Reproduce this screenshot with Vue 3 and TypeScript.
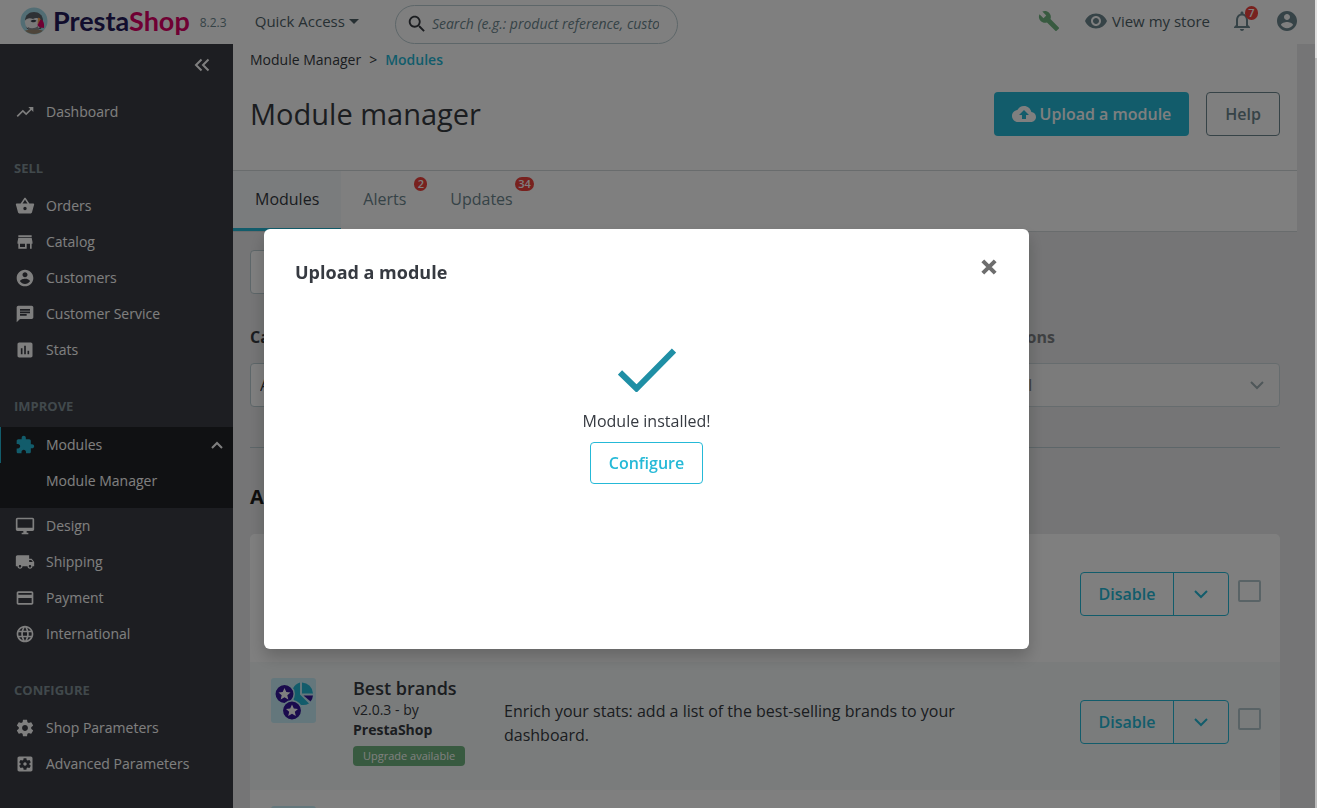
<script setup lang="ts">
import { ref } from 'vue'

interface NavItem {
  label: string
  icon: string
  active?: boolean
  children?: string[]
}
interface NavSection {
  title: string
  items: NavItem[]
}
interface ModuleRow {
  name: string
  version: string
  author: string
  description: string
  upgrade: boolean
  ready: boolean
}

const account =
  'M12 2C6.480 2 2 6.480 2 12s4.480 10 10 10 10-4.480 10-10S17.520 2 12 2zm0 3c1.660 0 3 1.340 3 3s-1.340 3-3 3-3-1.340-3-3 1.340-3 3-3zm0 14.200c-2.500 0-4.710-1.280-6-3.220.030-1.990 4-3.080 6-3.080 1.990 0 5.970 1.090 6 3.080-1.290 1.940-3.500 3.220-6 3.220z'

const icons: Record<string, string> = {
  trending: 'M16 6l2.290 2.290-4.880 4.880-4-4L2 16.590 3.410 18l6-6 4 4 6.300-6.290L22 12V6z',
  basket:
    'M17.210 9l-4.380-6.560c-.190-.280-.510-.420-.830-.420-.320 0-.640.140-.830.430L6.790 9H2c-.550 0-1 .450-1 1 0 .090.010.180.040.270l2.540 9.270c.230.840 1 1.460 1.920 1.460h13c.920 0 1.690-.620 1.930-1.460l2.540-9.270L23 10c0-.550-.450-1-1-1h-4.790zM9 9l3-4.400L15 9H9zm3 8c-1.100 0-2-.900-2-2s.900-2 2-2 2 .900 2 2-.900 2-2 2z',
  store: 'M20 4H4v2h16V4zm1 10v-2l-1-5H4l-1 5v2h1v6h10v-6h4v6h2v-6h1zm-9 4H6v-4h6v4z',
  account,
  chat: 'M20 2H4c-1.100 0-1.990.900-1.990 2L2 22l4-4h14c1.100 0 2-.900 2-2V4c0-1.100-.900-2-2-2zM6 9h12v2H6V9zm8 5H6v-2h8v2zm4-6H6V6h12v2z',
  stats:
    'M19 3H5c-1.100 0-2 .900-2 2v14c0 1.100.900 2 2 2h14c1.100 0 2-.900 2-2V5c0-1.100-.900-2-2-2zM9 17H7v-7h2v7zm4 0h-2V7h2v10zm4 0h-2v-4h2v4z',
  puzzle:
    'M20.500 11H19V7c0-1.100-.900-2-2-2h-4V3.500C13 2.120 11.880 1 10.500 1S8 2.120 8 3.500V5H4c-1.100 0-1.990.900-1.990 2v3.800H3.500c1.490 0 2.700 1.210 2.700 2.700s-1.210 2.700-2.700 2.700H2V20c0 1.100.900 2 2 2h3.800v-1.500c0-1.490 1.210-2.700 2.700-2.700 1.490 0 2.700 1.210 2.700 2.700V22H17c1.100 0 2-.900 2-2v-4h1.500c1.380 0 2.500-1.120 2.500-2.500S21.880 11 20.500 11z',
  desktop:
    'M21 2H3c-1.100 0-2 .900-2 2v12c0 1.100.900 2 2 2h7v2H8v2h8v-2h-2v-2h7c1.100 0 2-.900 2-2V4c0-1.100-.900-2-2-2zm0 12H3V4h18v10z',
  truck:
    'M20 8h-3V4H3c-1.100 0-2 .900-2 2v11h2c0 1.660 1.340 3 3 3s3-1.340 3-3h6c0 1.660 1.340 3 3 3s3-1.340 3-3h2v-5l-3-4zM6 18.500c-.830 0-1.500-.670-1.500-1.500s.670-1.500 1.500-1.500 1.500.670 1.500 1.500-.670 1.500-1.500 1.500zm13.500-9l1.960 2.500H17V9.500h2.500zm-1.500 9c-.830 0-1.500-.670-1.500-1.500s.670-1.500 1.500-1.500 1.500.670 1.500 1.500-.670 1.500-1.500 1.500z',
  card: 'M20 4H4c-1.110 0-1.990.890-1.990 2L2 18c0 1.110.890 2 2 2h16c1.110 0 2-.890 2-2V6c0-1.110-.890-2-2-2zm0 14H4v-6h16v6zm0-10H4V6h16v2z',
  globe:
    'M11.990 2C6.470 2 2 6.480 2 12s4.470 10 9.990 10C17.520 22 22 17.520 22 12S17.520 2 11.990 2zm6.930 6h-2.950c-.320-1.250-.780-2.450-1.380-3.560 1.840.630 3.370 1.910 4.330 3.560zM12 4.040c.830 1.200 1.480 2.530 1.910 3.960h-3.820c.430-1.430 1.080-2.760 1.910-3.960zM4.260 14C4.100 13.360 4 12.690 4 12s.100-1.360.260-2h3.380c-.080.660-.140 1.320-.140 2s.060 1.340.140 2H4.260zm.820 2h2.950c.320 1.250.780 2.450 1.380 3.560-1.840-.630-3.370-1.900-4.330-3.560zm2.950-8H5.080c.960-1.660 2.490-2.930 4.330-3.560C8.810 5.550 8.350 6.750 8.030 8zM12 19.960c-.830-1.200-1.480-2.530-1.910-3.960h3.820c-.430 1.430-1.080 2.760-1.910 3.960zM14.340 14H9.660c-.090-.660-.160-1.320-.160-2s.070-1.350.160-2h4.680c.090.650.160 1.320.160 2s-.070 1.340-.160 2zm.250 5.560c.600-1.110 1.060-2.310 1.380-3.560h2.950c-.960 1.650-2.490 2.930-4.330 3.560zM16.360 14c.080-.660.140-1.320.140-2s-.060-1.340-.140-2h3.380c.160.640.260 1.310.260 2s-.100 1.360-.260 2h-3.380z',
  gear: 'M19.430 12.980c.040-.320.070-.640.070-.980s-.030-.660-.070-.980l2.110-1.650c.190-.150.240-.420.120-.640l-2-3.460c-.120-.220-.390-.300-.610-.220l-2.490 1c-.520-.400-1.080-.730-1.690-.980l-.380-2.650C14.460 2.180 14.250 2 14 2h-4c-.250 0-.460.180-.490.420l-.380 2.650c-.610.250-1.170.590-1.690.980l-2.490-1c-.230-.090-.490 0-.610.220l-2 3.460c-.130.220-.070.490.120.640l2.110 1.650c-.040.320-.070.650-.070.980s.030.660.070.980l-2.110 1.650c-.190.150-.240.420-.120.640l2 3.460c.120.220.390.300.610.220l2.490-1c.520.400 1.080.730 1.690.980l.380 2.650c.030.240.240.420.490.420h4c.250 0 .460-.180.490-.420l.380-2.650c.610-.250 1.170-.590 1.690-.980l2.490 1c.230.090.490 0 .610-.220l2-3.460c.120-.220.070-.490-.120-.640l-2.110-1.650zM12 15.500c-1.930 0-3.500-1.570-3.500-3.500s1.570-3.500 3.500-3.500 3.500 1.570 3.500 3.500-1.570 3.500-3.500 3.500z',
  gearBox:
    'M12 10c-1.100 0-2 .900-2 2s.900 2 2 2 2-.900 2-2-.900-2-2-2zm7-7H5c-1.110 0-2 .900-2 2v14c0 1.100.890 2 2 2h14c1.110 0 2-.900 2-2V5c0-1.100-.890-2-2-2zm-1.750 9c0 .230-.020.460-.050.680l1.480 1.160c.130.110.170.300.080.450l-1.400 2.420c-.090.150-.270.210-.430.150l-1.740-.700c-.360.280-.760.510-1.180.690l-.260 1.850c-.030.170-.180.300-.350.300h-2.800c-.170 0-.320-.130-.350-.290l-.260-1.850c-.430-.180-.820-.410-1.180-.690l-1.740.700c-.160.060-.340 0-.430-.150l-1.400-2.420c-.090-.150-.050-.340.080-.450l1.480-1.160c-.030-.230-.050-.460-.050-.690 0-.230.020-.460.050-.680l-1.480-1.160c-.130-.110-.170-.300-.080-.450l1.400-2.420c.090-.150.270-.210.430-.150l1.740.700c.360-.280.760-.510 1.180-.690l.260-1.850c.030-.170.180-.300.350-.300h2.800c.170 0 .320.130.350.290l.260 1.850c.430.180.820.410 1.180.690l1.740-.700c.160-.060.340 0 .430.150l1.400 2.420c.090.150.050.340-.080.450l-1.480 1.160c.030.230.050.460.050.690z',
}

const sections: NavSection[] = [
  {
    title: 'SELL',
    items: [
      { label: 'Orders', icon: 'basket' },
      { label: 'Catalog', icon: 'store' },
      { label: 'Customers', icon: 'account' },
      { label: 'Customer Service', icon: 'chat' },
      { label: 'Stats', icon: 'stats' },
    ],
  },
  {
    title: 'IMPROVE',
    items: [
      { label: 'Modules', icon: 'puzzle', active: true, children: ['Module Manager'] },
      { label: 'Design', icon: 'desktop' },
      { label: 'Shipping', icon: 'truck' },
      { label: 'Payment', icon: 'card' },
      { label: 'International', icon: 'globe' },
    ],
  },
  {
    title: 'CONFIGURE',
    items: [
      { label: 'Shop Parameters', icon: 'gear' },
      { label: 'Advanced Parameters', icon: 'gearBox' },
    ],
  },
]

const tabs = [
  { label: 'Modules', count: 0 },
  { label: 'Alerts', count: 2 },
  { label: 'Updates', count: 34 },
]

const modules: ModuleRow[] = [
  { name: '', version: '', author: '', description: '', upgrade: false, ready: true },
  {
    name: 'Best brands',
    version: 'v2.0.3 - by',
    author: 'PrestaShop',
    description: 'Enrich your stats: add a list of the best-selling brands to your dashboard.',
    upgrade: true,
    ready: true,
  },
  { name: '', version: '', author: '', description: '', upgrade: false, ready: false },
]

const star = 'M0-6 1.800-2 6-1.600 2.800 1.200 3.800 5.400 0 3.200-3.800 5.400-2.800 1.200-6-1.600-1.800-2z'
const activeTab = ref('Modules')
const modalOpen = ref(true)
</script>

<template>
  <div class="shell">
    <header class="topbar">
      <a class="brand" href="#" aria-label="PrestaShop">
        <svg class="puffin" viewBox="0 0 28 28" aria-hidden="true">
          <circle cx="14" cy="14" r="13.500" fill="#a4dbe8" />
          <path d="M5 13C5.500 8 9 5 14 5s8.500 3 9 8l-2 9H7z" fill="#5d636b" />
          <path d="M4.800 14c1.700-3 5.200-3.500 8.200-2 2.500-1.500 5-1.500 6 .5l1 7.500c-2 3-11 3.500-13.500 0-1-1.500-1.700-4-1.700-6z" fill="#f5f5f5" />
          <path d="M10.500 14c2-1.500 4.500-1.500 6-.2-1 1.700-4.500 2.200-6 .2z" fill="#3f4450" />
          <path d="M8 20c3 2 7 1.500 10-1l1 4.500H8z" fill="#8b8f96" />
          <path d="M18 11c1.500-.5 2.500.5 3 2.500L17.500 18z" fill="#f2a154" />
          <path d="M20.500 12.500c2.500 0 4 3.500 3.500 8.500-3-.3-6-1-6.500-3z" fill="#df0067" />
          <path d="M5 23.500c6-1.500 12-1.500 18 0-4 4.500-14 4.500-18 0z" fill="#9c8b75" />
        </svg>
        <span class="wordmark">Presta<span>Shop</span></span>
      </a>
      <span class="version">8.2.3</span>
      <button class="quick" type="button">Quick Access <i class="caret"></i></button>
      <label class="search">
        <svg viewBox="0 0 24 24" aria-hidden="true">
          <path d="M15.500 14h-.790l-.280-.270C15.410 12.590 16 11.110 16 9.500 16 5.910 13.090 3 9.500 3S3 5.910 3 9.500 5.910 16 9.500 16c1.610 0 3.090-.590 4.230-1.570l.270.280v.790l5 4.990L20.490 19l-4.990-5zm-6 0C7.010 14 5 11.990 5 9.500S7.010 5 9.500 5 14 7.010 14 9.500 11.990 14 9.500 14z" />
        </svg>
        <input type="text" aria-label="Search" placeholder="Search (e.g.: product reference, customer name…)" />
      </label>
      <div class="tools">
        <a class="wrench" href="#" aria-label="Debug mode">
          <svg viewBox="0 0 24 24"><path d="M22.700 19l-9.100-9.100c.900-2.300.400-5-1.500-6.900-2-2-5-2.400-7.400-1.300L9 6 6 9 1.600 4.700C.400 7.100.900 10.100 2.900 12.100c1.900 1.900 4.600 2.400 6.900 1.500l9.100 9.100c.400.400 1 .400 1.400 0l2.300-2.300c.500-.400.500-1.100.100-1.400z" /></svg>
        </a>
        <a class="view" href="#">
          <svg viewBox="0 0 24 24" aria-hidden="true"><path d="M12 4.500C7 4.500 2.730 7.610 1 12c1.730 4.390 6 7.500 11 7.500s9.270-3.110 11-7.500c-1.730-4.390-6-7.500-11-7.500zM12 17c-2.760 0-5-2.240-5-5s2.240-5 5-5 5 2.240 5 5-2.240 5-5 5zm0-8c-1.660 0-3 1.340-3 3s1.340 3 3 3 3-1.340 3-3-1.340-3-3-3z" /></svg>
          View my store
        </a>
        <button class="bell" type="button" aria-label="Notifications">
          <svg viewBox="0 0 24 24"><path d="M12 22c1.100 0 2-.900 2-2h-4c0 1.100.900 2 2 2zm6-6v-5c0-3.070-1.630-5.640-4.500-6.320V4c0-.830-.670-1.500-1.500-1.500s-1.500.670-1.500 1.500v.680C7.640 5.360 6 7.920 6 11v5l-2 2v1h16v-1l-2-2zm-2 1H8v-6c0-2.480 1.510-4.500 4-4.500s4 2.020 4 4.500v6z" /></svg>
          <span class="badge">7</span>
        </button>
        <button class="user" type="button" aria-label="Account">
          <svg viewBox="0 0 24 24"><path :d="account" /></svg>
        </button>
      </div>
    </header>

    <nav class="sidebar" aria-label="Main">
      <button class="collapse" type="button" aria-label="Collapse menu">
        <svg viewBox="0 0 16 14"><path d="M7.500 1.500 2 7l5.500 5.500M14.500 1.500 9 7l5.500 5.500" /></svg>
      </button>
      <a class="item" href="#">
        <svg viewBox="0 0 24 24" aria-hidden="true"><path :d="icons.trending" /></svg>
        <span>Dashboard</span>
      </a>
      <section v-for="s in sections" :key="s.title">
        <h2>{{ s.title }}</h2>
        <template v-for="i in s.items" :key="i.label">
          <a class="item" :class="{ active: i.active }" href="#">
            <svg viewBox="0 0 24 24" aria-hidden="true"><path :d="icons[i.icon]" /></svg>
            <span>{{ i.label }}</span>
            <svg v-if="i.children" class="chevron" viewBox="0 0 12 8" aria-hidden="true"><path d="M1 7l5-5 5 5" /></svg>
          </a>
          <div v-if="i.children" class="submenu">
            <a v-for="c in i.children" :key="c" href="#">{{ c }}</a>
          </div>
        </template>
      </section>
    </nav>

    <main class="main">
      <div class="page-head">
        <ol class="crumbs">
          <li><a href="#">Module Manager</a></li>
          <li><a class="here" href="#">Modules</a></li>
        </ol>
        <div class="title-row">
          <h1>Module manager</h1>
          <button class="btn primary" type="button" @click="modalOpen = true">
            <svg viewBox="0 0 24 24" aria-hidden="true"><path d="M19.350 10.040C18.670 6.590 15.640 4 12 4 9.110 4 6.600 5.640 5.350 8.040 2.340 8.360 0 10.910 0 14c0 3.310 2.690 6 6 6h13c2.760 0 5-2.240 5-5 0-2.640-2.050-4.780-4.650-4.960zM14 13v4h-4v-4H7l5-5 5 5h-3z" /></svg>
            Upload a module
          </button>
          <button class="btn help" type="button">Help</button>
        </div>
        <div class="tabs">
          <a v-for="t in tabs" :key="t.label" href="#" :class="{ on: t.label === activeTab }" @click.prevent="activeTab = t.label">
            {{ t.label }}<span v-if="t.count" class="badge">{{ t.count }}</span>
          </a>
        </div>
      </div>

      <div class="content">
        <input class="find" type="text" aria-label="Search modules" />
        <div class="filters">
          <div class="field">
            <label for="category">Category</label>
            <div class="pick">
              <select id="category"><option>All categories</option></select>
              <svg viewBox="0 0 14 9" aria-hidden="true"><path d="M1 1l6 6 6-6" /></svg>
            </div>
          </div>
          <div class="field">
            <label for="status">Status</label>
            <div class="pick">
              <select id="status"><option>Show all modules</option></select>
              <svg viewBox="0 0 14 9" aria-hidden="true"><path d="M1 1l6 6 6-6" /></svg>
            </div>
          </div>
          <div class="field disabled">
            <label for="bulk">Bulk actions</label>
            <div class="pick">
              <select id="bulk" disabled><option>Uninstall</option></select>
              <svg viewBox="0 0 14 9" aria-hidden="true"><path d="M1 1l6 6 6-6" /></svg>
            </div>
          </div>
        </div>
        <hr />
        <h3>Administration</h3>
        <ul class="modules">
          <li v-for="(m, n) in modules" :key="n">
            <svg class="thumb" viewBox="0 0 45 45" aria-hidden="true">
              <rect width="45" height="45" rx="3" fill="#c8eef8" />
              <g v-if="n === 1">
                <path d="M29 4.500v12l9 9A11.500 11.500 0 1 1 29 4.500z" fill="#25b9d7" />
                <path d="M31 4.500A11.500 11.500 0 0 1 42 15.500H31z" fill="#25b9d7" />
                <path d="M32.500 17.500H42a11 11 0 0 1-2.500 6z" fill="#34179a" />
                <g fill="#34179a" stroke="#c8eef8" stroke-width="1.500">
                  <circle cx="13.500" cy="16" r="9.700" />
                  <circle cx="21" cy="32.500" r="9.700" />
                </g>
                <g fill="#fff">
                  <path :d="star" transform="translate(13.500 16)" />
                  <path :d="star" transform="translate(21 32.500)" />
                </g>
              </g>
            </svg>
            <div class="info">
              <template v-if="m.name">
                <h4>{{ m.name }}</h4>
                <p>{{ m.version }}</p>
                <p><b>{{ m.author }}</b></p>
                <span v-if="m.upgrade" class="upgrade">Upgrade available</span>
              </template>
            </div>
            <p class="desc">{{ m.description }}</p>
            <div v-if="m.ready" class="controls">
              <div class="actions">
                <button type="button">Disable</button>
                <button class="more" type="button" aria-label="More actions">
                  <svg viewBox="0 0 14 9"><path d="M1 1l6 6 6-6" /></svg>
                </button>
              </div>
              <input type="checkbox" :aria-label="'Select module ' + (n + 1)" />
            </div>
          </li>
        </ul>
      </div>
    </main>

    <div class="scrollbar" aria-hidden="true"></div>

    <div v-if="modalOpen" class="backdrop">
      <div class="modal" role="dialog" aria-modal="true" aria-labelledby="modal-title">
        <div class="modal-head">
          <h2 id="modal-title">Upload a module</h2>
          <button type="button" aria-label="Close" @click="modalOpen = false">
            <svg viewBox="0 0 16 16"><path d="M1.800 1.800l12.400 12.400M14.200 1.800L1.800 14.200" /></svg>
          </button>
        </div>
        <div class="modal-body">
          <svg class="check" viewBox="0 0 58 44" aria-hidden="true"><path d="M2 24.500l16.500 16L56 2.500" /></svg>
          <p>Module installed!</p>
          <a class="configure" href="#">Configure</a>
        </div>
      </div>
    </div>
  </div>
</template>

<style>
html,
body {
  margin: 0;
  background: #eaebec;
}
</style>

<style scoped>
* {
  box-sizing: border-box;
}
.shell {
  height: 100vh;
  overflow: hidden;
  display: grid;
  grid-template: 44px minmax(0, 1fr) / 233px minmax(0, 1fr) 2px;
  font: 14px/20px 'Open Sans', 'Noto Sans', sans-serif;
  color: #363a41;
}
button,
input,
select {
  font: inherit;
  color: inherit;
  margin: 0;
}
button {
  padding: 0;
  border: 0;
  background: none;
  cursor: pointer;
}
a {
  color: inherit;
  text-decoration: none;
}
h1,
h2,
h3,
h4,
p,
ul,
ol {
  margin: 0;
  padding: 0;
}
svg {
  display: block;
  flex: none;
  fill: currentColor;
}
.badge {
  background: #f0423c;
  color: #fff;
  font-size: 11px;
  font-weight: 600;
  line-height: 14px;
  text-align: center;
  border-radius: 7px;
  min-width: 13px;
}

.topbar {
  grid-column: 1 / 3;
  display: flex;
  align-items: center;
  background: #fff;
  padding: 0 16px 2px 20px;
}
.brand {
  display: flex;
  align-items: center;
  gap: 5px;
}
.puffin {
  width: 28px;
  height: 28px;
}
.wordmark {
  font: 700 27px/30px Lato, sans-serif;
  color: #251b5b;
}
.wordmark span {
  color: #df0067;
}
.version {
  width: 65px;
  padding: 4px 0 0 10px;
  font-size: 12px;
  color: #6c868e;
}
.quick {
  display: flex;
  align-items: center;
  gap: 4px;
  font-size: 15px;
  color: #4e6167;
}
.caret {
  border: 5px solid transparent;
  border-top-color: currentColor;
  border-bottom: 0;
}
.search {
  display: flex;
  align-items: center;
  gap: 4px;
  width: 283px;
  height: 39px;
  margin: 6px 0 0 36px;
  padding: 0 18px 0 10px;
  border: 1px solid #bbcdd2;
  border-radius: 20px;
}
.search svg {
  width: 22px;
  height: 22px;
}
.search input {
  flex: 1;
  min-width: 0;
  border: 0;
  padding: 0;
  outline: 0;
  background: none;
  font-style: italic;
}
.search input::placeholder {
  color: #6c868e;
  opacity: 1;
}
.tools {
  display: flex;
  align-items: center;
  margin-left: auto;
  color: #6c868e;
}
.wrench {
  color: #70b580;
  margin-right: 24px;
}
.tools svg {
  width: 24px;
  height: 24px;
}
.wrench svg {
  width: 22px;
  height: 22px;
}
.view {
  display: flex;
  align-items: center;
  gap: 4px;
  font-size: 15px;
  color: #4e6167;
}
.view svg {
  color: #6c868e;
}
.bell {
  position: relative;
  margin: 0 21px 0 20px;
}
.bell .badge {
  position: absolute;
  top: -3px;
  right: -4px;
}

.sidebar {
  background: #3a3c44;
  color: #fff;
  overflow: hidden;
}
.collapse {
  display: block;
  height: 50px;
  padding: 0 23px 8px;
  margin-left: auto;
}
.collapse svg {
  width: 16px;
  height: 14px;
  fill: none;
  stroke: currentColor;
  stroke-width: 2;
}
.item {
  display: flex;
  align-items: center;
  height: 36px;
  padding: 0 10px 0 15px;
  gap: 11px;
}
.item svg {
  width: 20px;
  height: 20px;
}
.item .chevron,
.pick svg,
.more svg {
  fill: none;
  stroke: currentColor;
  stroke-width: 2;
}
.item .chevron {
  width: 12px;
  height: 8px;
  margin-left: auto;
}
.sidebar h2 {
  font: 700 13px/20px 'Open Sans', sans-serif;
  color: #829299;
  padding: 28px 14px 10px;
}
.item.active,
.submenu {
  background: #202226;
}
.item.active {
  margin-top: 1px;
  box-shadow: inset 1px 0 #25b9d7;
}
.item.active svg:first-child {
  color: #25b9d7;
}
.submenu {
  padding-bottom: 9px;
}
.submenu a {
  display: block;
  padding-left: 46px;
  line-height: 36px;
}

.main {
  overflow: hidden;
  background: #eaebec;
  padding-right: 18px;
}
.page-head {
  background: #fff;
  border-bottom: 1px solid #d3d8db;
}
.crumbs {
  display: flex;
  list-style: none;
  padding: 6px 17px 0;
}
.crumbs li + li::before {
  content: '>';
  margin: 0 8px;
}
.here {
  color: #25b9d7;
  font-weight: 600;
}
.title-row {
  display: flex;
  align-items: flex-start;
  padding: 22px 17px 34px;
  border-bottom: 1px solid #d3d8db;
}
h1 {
  flex: 1;
  font-size: 29px;
  line-height: 44px;
  font-weight: 400;
}
.btn {
  height: 44px;
  border-radius: 4px;
  font-size: 16px;
  font-weight: 600;
}
.primary {
  display: flex;
  align-items: center;
  gap: 4px;
  padding: 0 18px;
  background: #25b9d7;
  color: #fff;
}
.primary svg {
  width: 24px;
  height: 24px;
}
.help {
  margin-left: 17px;
  padding: 0 18px;
  border: 1px solid #6c868e;
  color: #6c868e;
}
.tabs {
  display: flex;
  height: 60px;
}
.tabs a {
  position: relative;
  padding: 0 22px;
  font-size: 16px;
  line-height: 56px;
  color: #6c868e;
}
.tabs .on {
  background: #f4f8fb;
  color: #363a41;
  box-shadow: inset 0 -3px #25b9d7;
}
.tabs .badge {
  position: absolute;
  top: 6px;
  right: 1px;
  padding: 0 3px;
}
.content {
  padding: 18px 17px 0;
}
.find {
  display: block;
  width: 50%;
  height: 44px;
  border: 1px solid #bbcdd2;
  border-radius: 4px;
  background: #fff;
}
.filters {
  display: grid;
  grid-template-columns: repeat(3, minmax(0, 1fr));
  gap: 30px;
  margin-top: 33px;
}
.field label {
  display: block;
  font-size: 16px;
  font-weight: 700;
  margin-bottom: 16px;
}
.pick {
  position: relative;
  color: #6c868e;
}
.pick select {
  appearance: none;
  display: block;
  width: 100%;
  height: 44px;
  padding: 0 9px;
  border: 1px solid #bbcdd2;
  border-radius: 4px;
  background: #fff;
  font-size: 16px;
  color: #363a41;
  opacity: 1;
}
.pick svg {
  position: absolute;
  right: 16px;
  top: 18px;
  width: 14px;
  height: 9px;
}
.field.disabled {
  opacity: 0.6;
}
hr {
  margin: 40px 0 0;
  border: 0;
  border-top: 1px solid #bbcdd2;
}
h3 {
  margin-top: 36px;
  font-size: 20px;
  line-height: 26px;
  font-weight: 700;
  color: #1d1d1b;
}
.modules {
  margin-top: 24px;
  list-style: none;
  background: #fff;
  border-radius: 5px;
  overflow: hidden;
}
.modules li {
  display: grid;
  grid-template-columns: 45px 114px minmax(0, 1fr) 181px;
  column-gap: 37px;
  align-items: start;
  min-height: 128px;
  padding: 16px 19px 0 21px;
}
.modules li:nth-child(even) {
  background: #f4f9f8;
}
.thumb {
  width: 45px;
  height: 45px;
}
h4 {
  font-size: 18px;
  line-height: 20px;
  font-weight: 600;
}
.info p:first-of-type {
  padding-top: 2px;
}
.upgrade {
  display: inline-block;
  margin-top: 6px;
  padding: 0 10px;
  border-radius: 4px;
  background: #70b580;
  color: #fff;
  font-size: 11px;
  white-space: nowrap;
}
.desc {
  max-width: 480px;
  padding-top: 21px;
  font-size: 16px;
  line-height: 24px;
}
.controls {
  display: flex;
  align-items: flex-start;
  gap: 9px;
  margin-top: 22px;
}
.actions {
  flex: 1;
  display: flex;
  border: 1px solid #25b9d7;
  border-radius: 4px;
  color: #25b9d7;
}
.actions button {
  flex: 1;
  height: 42px;
  font-size: 16px;
  font-weight: 600;
}
.actions .more {
  flex: 0 0 55px;
  border-left: 1px solid #25b9d7;
}
.more svg {
  width: 14px;
  height: 9px;
  margin: auto;
}
.modules input {
  appearance: none;
  width: 23px;
  height: 22px;
  margin-top: 8px;
  border: 2px solid #b3c7cd;
  border-radius: 2px;
}

.scrollbar {
  grid-area: 1 / 3 / 3 / 4;
  background: linear-gradient(#e0e0e0 58px, #bdbdbd 58px);
}

.backdrop {
  position: fixed;
  inset: 0 2px 0 0;
  display: flex;
  justify-content: center;
  align-items: flex-start;
  padding: 229px 22px 0 0;
  background: rgba(0, 0, 0, 0.5);
}
.modal {
  width: calc(100% - 528px);
  min-height: 420px;
  background: #fff;
  border-radius: 6px;
  box-shadow: 0 8px 16px rgba(0, 0, 0, 0.2);
}
.modal-head {
  display: flex;
  justify-content: space-between;
  padding: 30px 32px 0 31px;
}
.modal-head h2 {
  font-size: 18px;
  line-height: 26px;
  font-weight: 700;
}
.modal-head button {
  align-self: flex-start;
  color: #6d6d6d;
}
.modal-head svg {
  width: 16px;
  height: 16px;
  fill: none;
  stroke: currentColor;
  stroke-width: 4;
}
.modal-body {
  display: flex;
  flex-direction: column;
  align-items: center;
  padding-top: 63px;
  font-size: 16px;
  line-height: 24px;
}
.check {
  width: 58px;
  height: 44px;
  fill: none;
  stroke: #1f8fa5;
  stroke-width: 6;
}
.modal-body p {
  margin: 17px 0 9px;
}
.configure {
  padding: 0 18px;
  border: 1px solid #25b9d7;
  border-radius: 4px;
  color: #25b9d7;
  font-weight: 600;
  line-height: 40px;
}
</style>
